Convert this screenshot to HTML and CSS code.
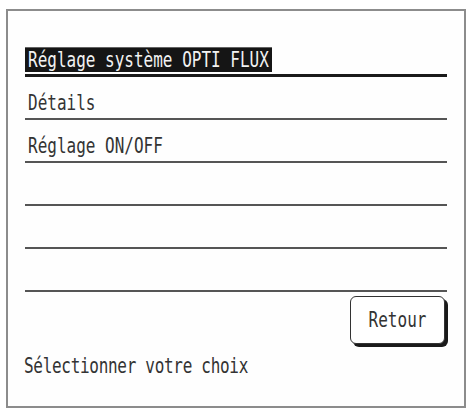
FILE: index.html
```html
<!DOCTYPE html>
<html lang="fr">
<head>
<meta charset="utf-8">
<title>Réglage système OPTI FLUX</title>
<link rel="stylesheet" href="styles.css">
</head>
<body>
<div class="screen">
  <ul class="menu">
    <li class="item item-first"><span class="label label-selected">Réglage système OPTI FLUX</span></li>
    <li class="item"><span class="label">Détails</span></li>
    <li class="item"><span class="label">Réglage ON/OFF</span></li>
    <li class="item"></li>
    <li class="item"></li>
    <li class="item"></li>
  </ul>
  <div class="footer">
    <button class="btn" type="button"><span class="btn-text">Retour</span></button>
    <div class="hint"><span class="label hint-text">Sélectionner votre choix</span></div>
  </div>
</div>
</body>
</html>
```

FILE: styles.css
```css
html, body {
  margin: 0;
  padding: 0;
  background: #ffffff;
}

body {
  width: 470px;
  height: 410px;
  overflow: hidden;
  font-family: "DejaVu Sans Mono", "Liberation Mono", monospace;
  color: #333333;
}

.screen {
  box-sizing: border-box;
  margin: 9px 0 0 6px;
  width: 460px;
  height: 399px;
  border: 2px solid #8c8c8c;
  background: #fefefe;
  display: flex;
  flex-direction: column;
}

.menu {
  list-style: none;
  margin: 0;
  padding: 23px 17px 0 17px;
}

.item {
  box-sizing: border-box;
  height: 43px;
  border-bottom: 2px solid #555555;
  display: flex;
  align-items: flex-end;
  padding-bottom: 3px;
}

.item-first {
  border-bottom: 3px solid #1a1a1a;
  padding-bottom: 2px;
}

.label {
  display: inline-block;
  font-size: 16px;
  line-height: 18px;
  padding: 0 3px;
  white-space: pre;
  transform: scaleY(1.37);
  transform-origin: left bottom;
  color: #333333;
}

.label-selected {
  background: #151515;
  color: #f2f2f2;
}

.footer {
  display: flex;
  flex-direction: column;
}

.btn {
  align-self: flex-end;
  box-sizing: border-box;
  margin: 4px 19px 0 0;
  width: 95px;
  height: 48px;
  border: 1.5px solid #333333;
  border-radius: 6px;
  background: #ffffff;
  box-shadow: 3px 3px 0 #1a1a1a;
  padding: 0;
  display: flex;
  align-items: center;
  justify-content: center;
  font-family: inherit;
}

.btn-text {
  display: inline-block;
  font-size: 16px;
  line-height: 18px;
  color: #333333;
  transform: scaleY(1.37);
}

.hint {
  display: flex;
  margin-top: 16px;
  padding-left: 13px;
}

.hint-text {
  letter-spacing: -0.3px;
}
```
